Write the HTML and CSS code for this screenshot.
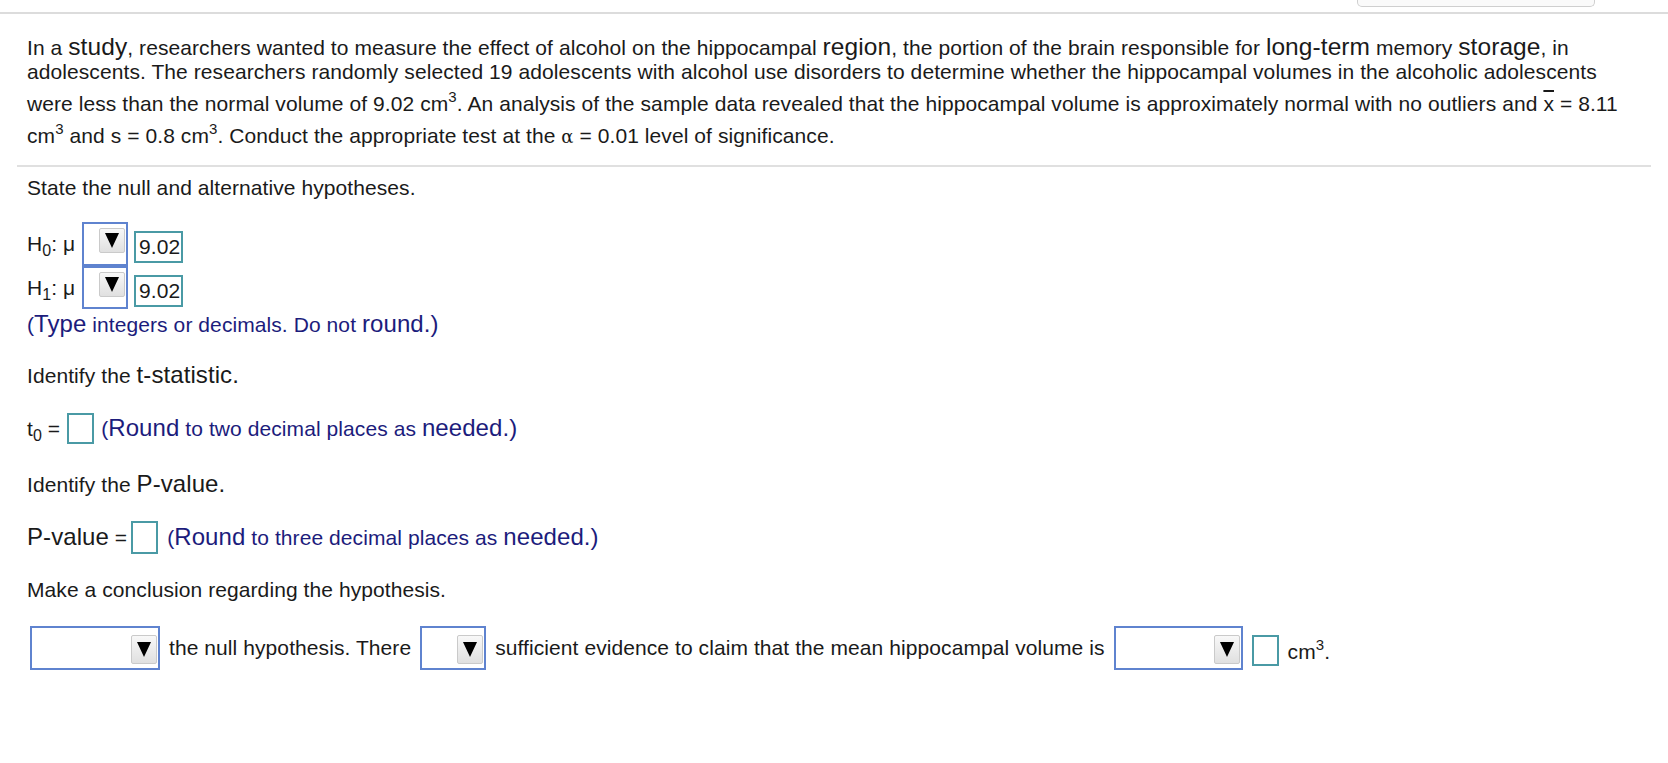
FILE: index.html
```html
<!DOCTYPE html>
<html lang="en">
<head>
<meta charset="utf-8">
<title>Hypothesis test</title>
<link rel="stylesheet" href="styles.css">
</head>
<body>
<div class="topbar"><div class="tab"></div></div>
<p class="stem">In a <span class="big">study</span>, researchers wanted to measure the effect of alcohol on the hippocampal <span class="big">region</span>, the portion of the brain responsible for <span class="big">long-term</span> memory <span class="big">storage</span>, in<br>adolescents. The researchers randomly selected 19 adolescents with alcohol use disorders to determine whether the hippocampal volumes in the alcoholic adolescents<br>were less than the normal volume of 9.02 cm<sup>3</sup>. An analysis of the sample data revealed that the hippocampal volume is approximately normal with no outliers and <span class="xbar">x</span> = 8.11<br>cm<sup>3</sup> and s = 0.8 cm<sup>3</sup>. Conduct the appropriate test at the <span class="alpha">α</span> = 0.01 level of significance.</p>

<section class="work">
  <p class="prompt p-state">State the null and alternative hypotheses.</p>
  <div class="hyps">
    <div class="hyp-row h0">
      <span class="hlabel">H<sub>0</sub>: μ</span>
      <span class="select sel-h"><span class="btn"><span class="tri"></span></span></span>
      <span class="num">9.02</span>
    </div>
    <div class="hyp-row h1">
      <span class="hlabel">H<sub>1</sub>: μ</span>
      <span class="select sel-h"><span class="btn"><span class="tri"></span></span></span>
      <span class="num">9.02</span>
    </div>
  </div>
  <p class="note n-type">(<span class="nbig">Type</span> integers or decimals. Do not <span class="nbig">round.)</span></p>

  <p class="prompt p-t">Identify the <span class="pbig">t-statistic.</span></p>
  <div class="answer-row row-t">
    <span class="tlabel">t<sub>0</sub> =</span>
    <span class="box box-t"></span>
    <span class="note">(<span class="nbig">Round</span> to two decimal places as <span class="nbig">needed.)</span></span>
  </div>

  <p class="prompt p-p">Identify the <span class="pbig">P-value.</span></p>
  <div class="answer-row row-p">
    <span class="plabel"><span class="pbig">P-value</span> =</span>
    <span class="box box-p"></span>
    <span class="note">(<span class="nbig">Round</span> to three decimal places as <span class="nbig">needed.)</span></span>
  </div>

  <p class="prompt p-c">Make a conclusion regarding the hypothesis.</p>
  <div class="conclusion">
    <span class="select sel-c sel-wide1"><span class="btn btn-c"><span class="tri"></span></span></span>
    <span>the null hypothesis. There</span>
    <span class="select sel-c sel-narrow"><span class="btn btn-c"><span class="tri"></span></span></span>
    <span>sufficient evidence to claim that the mean hippocampal volume is</span>
    <span class="select sel-c sel-wide2"><span class="btn btn-c"><span class="tri"></span></span></span>
    <span class="box box-c"></span>
    <span>cm<sup>3</sup>.</span>
  </div>
</section>
</body>
</html>
```

FILE: styles.css
```css
* { box-sizing: border-box; }

body {
  margin: 0;
  background: #ffffff;
  color: #1a1a1a;
  font-family: "Liberation Sans", Arial, sans-serif;
  font-size: 21px;
  line-height: 24px;
  letter-spacing: 0.08px;
}

.topbar {
  height: 14px;
  border-bottom: 2px solid #dcdcdc;
  display: flex;
  justify-content: flex-end;
  padding-right: 73px;
}

.tab {
  width: 238px;
  height: 7px;
  border: 1px solid #cfcfcf;
  border-top: none;
  border-radius: 0 0 5px 5px;
  background: #fafafa;
}

.stem {
  margin: 0;
  padding: 21px 20px 0 27px;
  white-space: nowrap;
}

.big { font-size: 24.5px; }

sup {
  font-size: 15px;
  line-height: 25px;
  vertical-align: 9px;
}

.xbar { text-decoration: overline; }

.alpha {
  font-family: "DejaVu Serif", "Liberation Serif", serif;
  font-size: 18px;
}

.work {
  margin: 16px 17px 0;
  padding: 0 10px;
  border-top: 2px solid #e0e0e0;
}

.prompt { margin: 0; }
.p-state { margin-top: 9px; }
.p-t { margin-top: 26px; }
.p-p { margin-top: 28px; }
.p-c { margin-top: 24px; }

.pbig { font-size: 24px; }

.note { color: #1c1c7c; margin: 0; }
.nbig { font-size: 24px; }
.n-type { margin-top: 3px; }

.hyps {
  margin-top: 22px;
  display: flex;
  flex-direction: column;
}

.hyp-row {
  display: flex;
  align-items: center;
}
.hyp-row.h0 { height: 44px; }
.hyp-row.h1 { height: 43px; }

.hlabel {
  width: 55px;
  white-space: nowrap;
}

sub {
  font-size: 16px;
  line-height: 0;
  vertical-align: -5px;
}

.select {
  display: flex;
  justify-content: flex-end;
  border: 2px solid #5f83cf;
  background: #ffffff;
}

.sel-h {
  width: 46px;
  height: 100%;
  align-items: flex-start;
  padding: 4px 1px 0 0;
}

.btn {
  width: 26px;
  height: 25px;
  display: flex;
  align-items: center;
  justify-content: center;
  background: linear-gradient(#f8f8f8, #e0e0e0);
  border: 1px solid #cacaca;
  border-radius: 2px;
}

.tri {
  width: 0;
  height: 0;
  border-left: 7px solid transparent;
  border-right: 7px solid transparent;
  border-top: 15px solid #000000;
}

.num {
  margin-left: 6px;
  margin-top: 6px;
  width: 49px;
  height: 32px;
  border: 2px solid #4a9aa5;
  padding-left: 3px;
  line-height: 28px;
}

.answer-row {
  display: flex;
  align-items: center;
  white-space: nowrap;
}

.row-t { margin-top: 25px; height: 31px; gap: 7px; }
.row-p { margin-top: 24px; height: 33px; gap: 4px; }

.box {
  display: block;
  border: 2px solid #4a9aa5;
  background: #fff;
}
.box-t { width: 27px; height: 31px; }
.box-p { width: 27px; height: 33px; margin-right: 5px; }
.box-c { width: 27px; height: 31px; margin-top: 4px; }

.conclusion {
  margin-top: 24px;
  margin-left: 3px;
  height: 44px;
  display: flex;
  align-items: center;
  gap: 9px;
  white-space: nowrap;
}

.sel-c {
  height: 44px;
  align-items: center;
  padding: 3px 1px 0 0;
}
.btn-c { height: 29px; }

.sel-wide1 { width: 130px; }
.sel-narrow { width: 66px; }
.sel-wide2 { width: 129px; }
```
